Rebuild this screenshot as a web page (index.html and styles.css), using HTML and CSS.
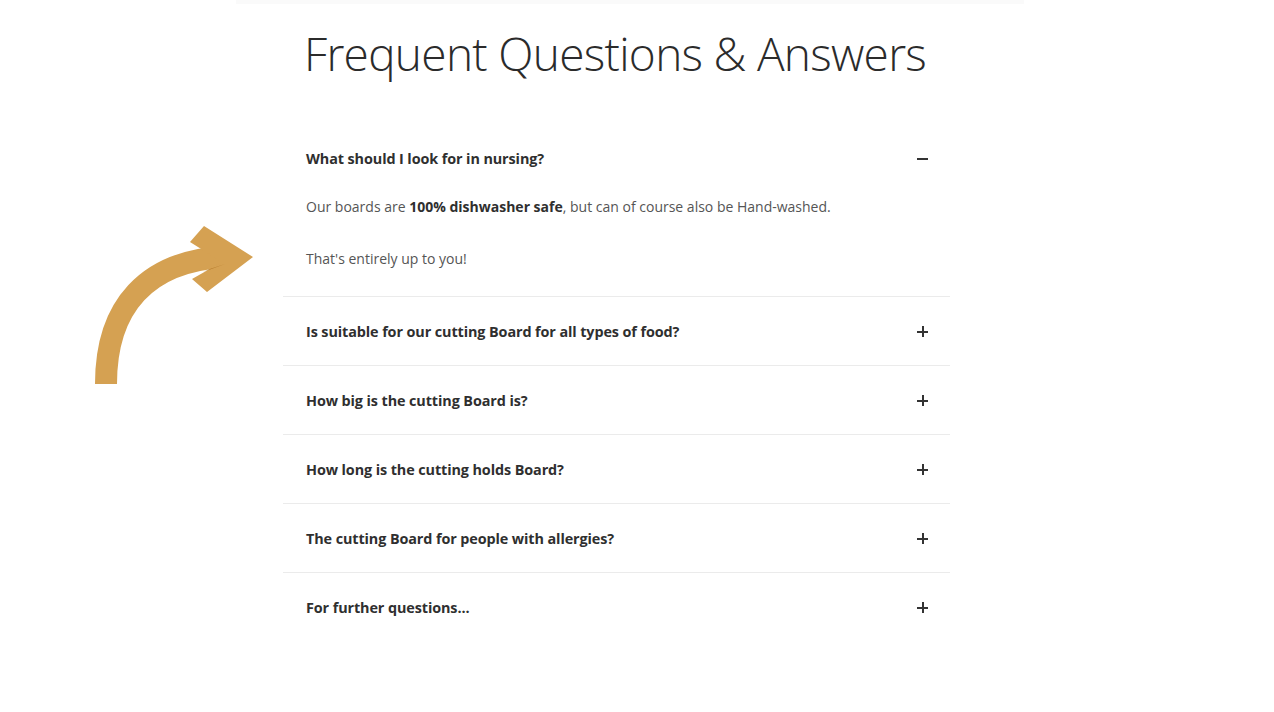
FILE: index.html
```html
<!DOCTYPE html>
<html lang="en">
<head>
<meta charset="utf-8">
<title>Frequent Questions &amp; Answers</title>
<link rel="stylesheet" href="styles.css">
</head>
<body>
<div class="topbar"></div>
<div class="page">
  <div class="arrow-col">
    <svg class="arrow" width="180" height="180" viewBox="90 220 180 180" aria-hidden="true">
      <path d="M106 384 C106 305 148 262 222 257" fill="none" stroke="#D5A152" stroke-width="22"/>
      <polygon points="190,242 204,226 253,257 207,292 192,279 222,262" fill="#D5A152"/>
      <path d="M203 272 L225 264 L210 269 Z" fill="#A96C1E"/>
    </svg>
  </div>
  <main class="faq">
    <h1 class="title">Frequent Questions &amp; Answers</h1>
    <div class="list">
      <div class="item open">
        <div class="q"><span>What should I look for in nursing?</span><span class="icon minus"></span></div>
        <div class="a">
          <p>Our boards are <b>100% dishwasher safe</b>, but can of course also be Hand-washed.</p>
          <p>That's entirely up to you!</p>
        </div>
      </div>
      <div class="item">
        <div class="q"><span>Is suitable for our cutting Board for all types of food?</span><span class="icon plus"></span></div>
      </div>
      <div class="item">
        <div class="q"><span>How big is the cutting Board is?</span><span class="icon plus"></span></div>
      </div>
      <div class="item">
        <div class="q"><span>How long is the cutting holds Board?</span><span class="icon plus"></span></div>
      </div>
      <div class="item">
        <div class="q"><span>The cutting Board for people with allergies?</span><span class="icon plus"></span></div>
      </div>
      <div class="item last">
        <div class="q"><span>For further questions...</span><span class="icon plus"></span></div>
      </div>
    </div>
  </main>
</div>
</body>
</html>
```
FILE: styles.css
```css
html, body {
  margin: 0;
  padding: 0;
  background: #ffffff;
}
body {
  font-family: "Open Sans", "Noto Sans", sans-serif;
  color: #333333;
  width: 1274px;
  height: 712px;
  overflow: hidden;
}
.topbar {
  height: 4px;
  margin: 0 250px 0 236px;
  background: #fafafa;
}
.page {
  display: flex;
}
.arrow-col {
  width: 283px;
  flex: 0 0 283px;
  position: relative;
}
.arrow {
  position: absolute;
  left: 90px;
  top: 216px;
}
.faq {
  width: 667px;
}
.title {
  margin: 19px 0 0 21px;
  font-weight: 300;
  font-size: 46px;
  line-height: 60px;
  color: #2b2b2b;
  letter-spacing: -0.7px;
}
.list {
  margin-top: 40px;
}
.item {
  border-bottom: 1px solid #ebebeb;
}
.item.last {
  border-bottom: none;
}
.q {
  display: flex;
  align-items: center;
  justify-content: space-between;
  height: 68px;
  padding: 0 22px 0 23px;
  font-size: 14.4px;
  font-weight: 700;
  color: #2f2f2f;
  letter-spacing: -0.1px;
}
.open .q {
  height: 70px;
}
.a {
  padding: 4px 23px 27px;
  font-size: 14px;
  color: #555555;
  letter-spacing: 0;
}
.a p {
  margin: 0 0 32px;
  line-height: 20px;
}
.a p:last-child {
  margin-bottom: 0;
}
.a b {
  color: #2f2f2f;
}
.icon {
  position: relative;
  width: 11px;
  height: 11px;
}
.icon::before,
.icon::after {
  content: "";
  position: absolute;
  background: #333333;
}
.icon::before {
  left: 0;
  top: 5px;
  width: 11px;
  height: 2px;
}
.plus::after {
  left: 5px;
  top: 0;
  width: 2px;
  height: 11px;
}
.minus::after {
  display: none;
}
```
